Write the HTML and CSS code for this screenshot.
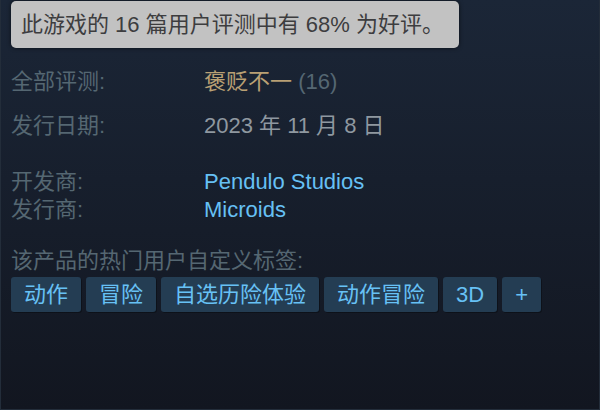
FILE: index.html
```html
<!DOCTYPE html>
<html lang="zh-CN">

<head>
    <meta charset="UTF-8">
    <title>用户评测</title>
    <link rel="stylesheet" href="styles.css">
</head>

<body>
    <div class="glance">
        <div class="review-tooltip">此游戏的 16 篇用户评测中有 68% 为好评。</div>

        <div class="row row-reviews">
            <div class="label">全部评测:</div>
            <div class="value"><span class="mixed">褒贬不一</span> <span class="count">(16)</span></div>
        </div>

        <div class="row row-date">
            <div class="label">发行日期:</div>
            <div class="value date">2023 年 11 月 8 日</div>
        </div>

        <div class="row row-dev">
            <div class="label">开发商:</div>
            <div class="value"><a href="#">Pendulo Studios</a></div>
        </div>
        <div class="row">
            <div class="label">发行商:</div>
            <div class="value"><a href="#">Microids</a></div>
        </div>

        <div class="tags-title">该产品的热门用户自定义标签:</div>
        <div class="tags">
            <a class="tag" href="#">动作</a>
            <a class="tag" href="#">冒险</a>
            <a class="tag" href="#">自选历险体验</a>
            <a class="tag" href="#">动作冒险</a>
            <a class="tag" href="#">3D</a>
            <a class="tag" href="#">+</a>
        </div>
    </div>
</body>

</html>
```

FILE: styles.css
```css
* {
    box-sizing: border-box;
    margin: 0;
    padding: 0;
}

html,
body {
    height: 100%;
}

body {
    background: linear-gradient(to bottom, #1b2637, #121620);
    font-family: 'Liberation Sans', 'Noto Sans CJK SC', sans-serif;
    font-size: 22px;
    line-height: 28px;
    color: #8f98a0;
    border: 1px solid #232d3a;
    border-top: none;
}

.glance {
    padding: 1px 0 0 10px;
}

.review-tooltip {
    display: inline-block;
    background: #c2c2c2;
    color: #3d3d3f;
    border-radius: 5px;
    height: 47px;
    line-height: 47px;
    padding: 0 15px 0 10px;
    box-shadow: 0 0 4px rgba(0, 0, 0, 0.6);
}

.row {
    display: flex;
}

.row-reviews {
    margin-top: 20px;
}

.row-date {
    margin-top: 16px;
}

.row-dev {
    margin-top: 28px;
}

.label {
    width: 193px;
    color: #556772;
}

.mixed {
    color: #b9a074;
}

.count {
    color: #556772;
}

.value a {
    color: #66c0f4;
    text-decoration: none;
}

.tags-title {
    margin-top: 23px;
    color: #556772;
}

.tags {
    display: flex;
    gap: 5px;
    margin-top: 2px;
}

.tag {
    display: block;
    height: 35px;
    line-height: 35px;
    padding: 0 13px;
    border-radius: 3px;
    background: #243d53;
    color: #67c1f5;
    text-decoration: none;
    box-shadow: 1px 1px 0 rgba(0, 0, 0, 0.3);
}
```
